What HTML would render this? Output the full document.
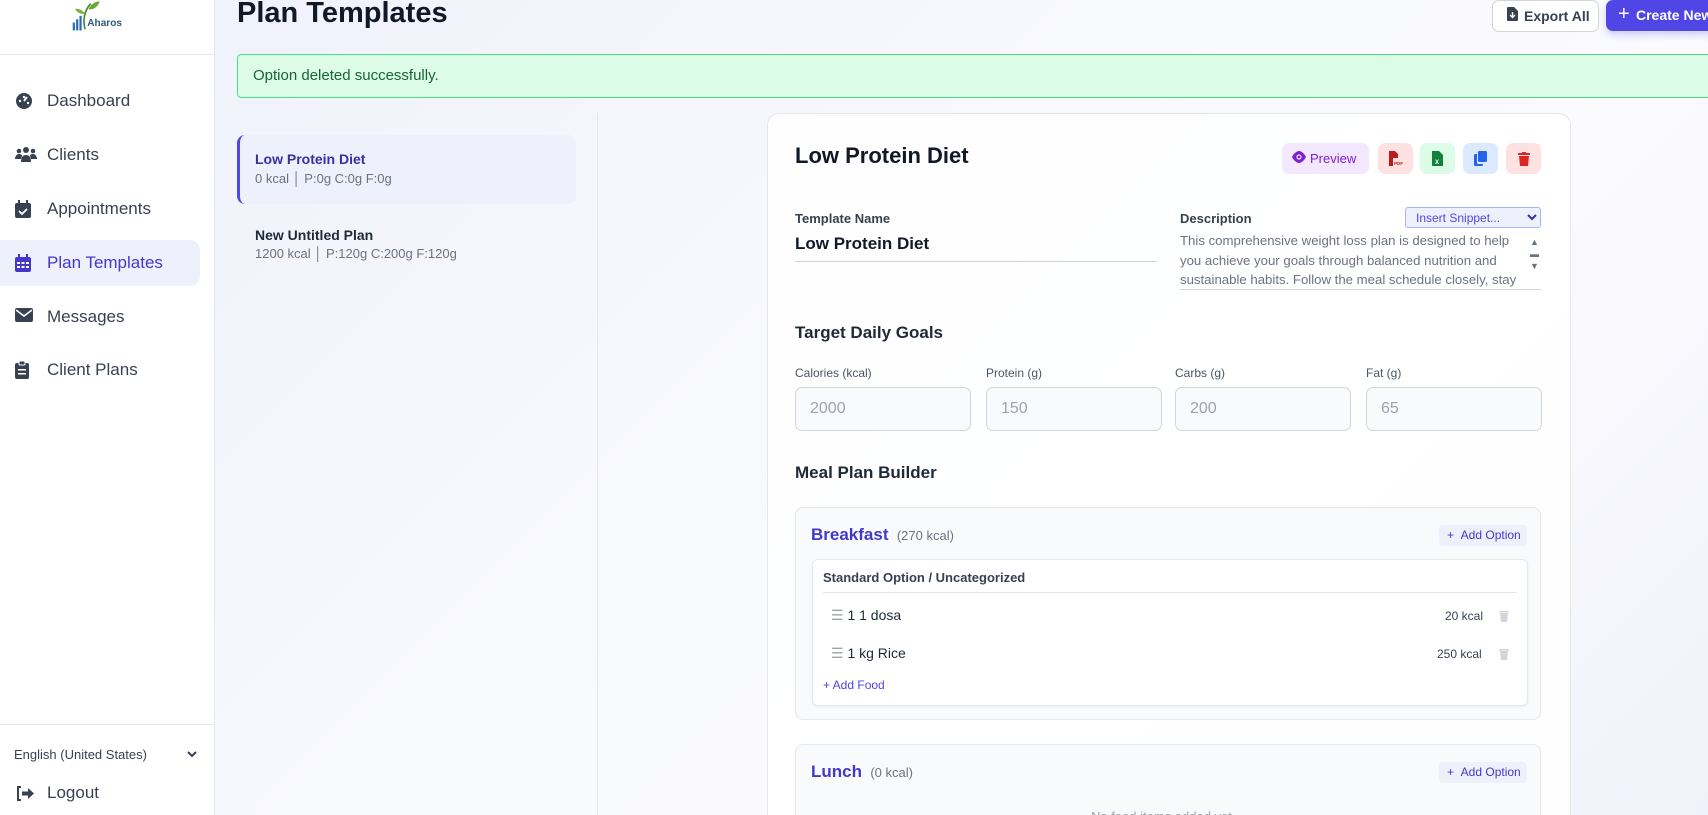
<!DOCTYPE html>
<html><head><meta charset="utf-8"><style>
*{box-sizing:border-box;margin:0;padding:0}
html{width:1708px;height:815px;overflow:hidden}
body{width:1708px;height:815px;overflow:hidden;font-family:"Liberation Sans",sans-serif;background:linear-gradient(135deg,#eef0fb 0%,#f8f9fd 45%,#fbfbfe 70%,#f1f1fb 100%);position:relative;color:#1f2937}
.a{position:absolute;white-space:nowrap}
.sb{position:absolute;left:0;top:0;width:215px;height:815px;background:#fff;border-right:1px solid #e5e7eb}
.nav{position:absolute;left:0;width:200px;height:46px;font-size:17px;color:#374151;display:flex;align-items:center;padding-left:47px}
.nav svg{position:absolute;left:15px;top:14px}
.nav.on{background:#eef0fc;color:#4338ca;border-radius:0 10px 10px 0}
.card{position:absolute;left:767px;top:113px;width:804px;height:702px;background:rgba(255,255,255,.85);border:1px solid #e5e7eb;border-bottom:none;border-radius:12px 12px 0 0}
.ib{position:absolute;top:143px;width:35px;height:31px;border-radius:7px}
.lbl{font-size:12px;color:#4b5563}
.inp{position:absolute;top:387px;width:176px;height:44px;border:1px solid #d1d5db;border-radius:7px;background:#f9fafb;font-size:16px;color:#9ca3af;padding:12px 0 0 14px}
.panel{position:absolute;left:795px;width:746px;background:#f9fafb;border:1px solid #e5e7eb;border-radius:8px}
.addopt{position:absolute;left:643px;width:88px;height:21px;background:#eef0fc;border-radius:4px;color:#4338ca;font-size:12px;padding:3px 0 0 8px}
</style></head><body>
<div class="sb">
  <div class="a" style="left:66px;top:0;width:56px;height:34px">
    <svg width="56" height="34" viewBox="0 0 50 30"><path d="M17 26 C15 18 16 10 22 3" stroke="#4a8a2a" stroke-width="1.5" fill="none"/><path d="M20 8c3-6 8-7 10-7-1 4-5 8-10 7z" fill="#65a832"/><path d="M17 12c-3-4-7-5-9-4 2 3 5 5 9 4z" fill="#7cb342"/><rect x="6" y="20" width="2" height="7" fill="#2a6fb0"/><rect x="9" y="17" width="2" height="10" fill="#2a6fb0"/><rect x="12" y="14" width="2" height="13" fill="#2a6fb0"/><text x="19" y="23" font-size="9" font-family="Liberation Sans" font-weight="bold" fill="#2c5a7a">Aharos</text></svg>
  </div>
  <div class="a" style="left:0;top:54px;width:215px;border-top:1px solid #e5e7eb"></div>
  <div class="nav" style="top:78px"><svg width="18" height="18" viewBox="0 0 18 18"><circle cx="9" cy="9" r="8" fill="#374151"/><path d="M9 9l3-4" stroke="#fff" stroke-width="2"/><circle cx="5" cy="9" r="1.2" fill="#fff"/><circle cx="9" cy="5" r="1.2" fill="#fff"/><circle cx="13" cy="11" r="1.2" fill="#fff"/></svg>Dashboard</div>
  <div class="nav" style="top:132px"><svg width="22" height="16" viewBox="0 0 22 16"><circle cx="11" cy="4" r="3" fill="#374151"/><circle cx="4" cy="5" r="2.3" fill="#374151"/><circle cx="18" cy="5" r="2.3" fill="#374151"/><path d="M6 16c0-5 2-7 5-7s5 2 5 7z M0 13c0-3 2-5 4-5s3 1 3 2l-1 3z M22 13c0-3-2-5-4-5s-3 1-3 2l1 3z" fill="#374151"/></svg>Clients</div>
  <div class="nav" style="top:186px"><svg width="16" height="18" viewBox="0 0 16 18"><rect x="0" y="3" width="16" height="15" rx="2" fill="#374151"/><rect x="3" y="0" width="2" height="4" fill="#374151"/><rect x="11" y="0" width="2" height="4" fill="#374151"/><path d="M4 11l3 3 5-5" stroke="#fff" stroke-width="1.8" fill="none"/></svg>Appointments</div>
  <div class="nav on" style="top:240px"><svg width="16" height="18" viewBox="0 0 16 18"><rect x="0" y="3" width="16" height="15" rx="2" fill="#4338ca"/><rect x="3" y="0" width="2" height="4" fill="#4338ca"/><rect x="11" y="0" width="2" height="4" fill="#4338ca"/><g fill="#fff"><rect x="2" y="8" width="3" height="2"/><rect x="6.5" y="8" width="3" height="2"/><rect x="11" y="8" width="3" height="2"/><rect x="2" y="12" width="3" height="2"/><rect x="6.5" y="12" width="3" height="2"/><rect x="11" y="12" width="3" height="2"/></g></svg>Plan Templates</div>
  <div class="nav" style="top:294px"><svg width="18" height="14" viewBox="0 0 18 14"><rect x="0" y="0" width="18" height="14" rx="2" fill="#374151"/><path d="M1 2l8 6 8-6" stroke="#fff" stroke-width="1.5" fill="none"/></svg>Messages</div>
  <div class="nav" style="top:347px"><svg width="14" height="18" viewBox="0 0 14 18"><rect x="0" y="2" width="14" height="16" rx="2" fill="#374151"/><rect x="4" y="0" width="6" height="4" rx="1" fill="#374151" stroke="#fff"/><rect x="3" y="8" width="8" height="1.5" fill="#fff"/><rect x="3" y="12" width="8" height="1.5" fill="#fff"/></svg>Client Plans</div>
  <div class="a" style="left:0;top:724px;width:215px;border-top:1px solid #e5e7eb"></div>
  <div class="a" style="left:14px;top:747px;font-size:13px;color:#374151">English (United States)</div>
  <svg class="a" style="left:187px;top:750px" width="10" height="8" viewBox="0 0 10 8"><path d="M1 2l4 4 4-4" stroke="#374151" stroke-width="2" fill="none"/></svg>
  <svg class="a" style="left:16px;top:786px" width="18" height="15" viewBox="0 0 18 15"><path d="M5 1H2v13h3" stroke="#374151" stroke-width="2" fill="none"/><path d="M6 5.5h6V2l6 5.5-6 5.5V9.5H6z" fill="#374151"/></svg>
  <div class="a" style="left:47px;top:783px;font-size:17px;color:#374151">Logout</div>
</div>

<div class="a" style="left:237px;top:-3px;font-size:29px;font-weight:bold;color:#111827">Plan Templates</div>
<div class="a" style="left:1492px;top:0;width:107px;height:32px;background:#fff;border:1px solid #d1d5db;border-radius:7px;font-size:14px;font-weight:bold;color:#374151;padding:7px 0 0 31px">Export All</div>
<svg class="a" style="left:1507px;top:7px" width="11" height="14" viewBox="0 0 11 14"><path d="M0 1a1 1 0 011-1h6l4 4v9a1 1 0 01-1 1H1a1 1 0 01-1-1z" fill="#374151"/><path d="M5.5 5v5M3 8l2.5 2.5L8 8" stroke="#fff" stroke-width="1.4" fill="none"/></svg>
<div class="a" style="left:1606px;top:0;width:110px;height:31px;background:#4f46e5;border-radius:7px;font-size:14px;font-weight:bold;color:#fff;padding:7px 0 0 30px;box-shadow:0 4px 8px rgba(79,70,229,.25)">Create New</div>
<div class="a" style="left:1618px;top:3px;color:#fff;font-size:20px">+</div>

<div class="a" style="left:237px;top:54px;width:1480px;height:44px;background:#dcfce7;border:1px solid #4ade80;border-radius:4px;font-size:15px;color:#166534;padding:12px 0 0 15px">Option deleted successfully.</div>

<div class="a" style="left:597px;top:113px;height:702px;border-left:1px solid #e5e7eb"></div>
<div class="a" style="left:237px;top:135px;width:339px;height:69px;background:#eef0fb;border-left:3px solid #4f46e5;border-radius:8px"></div>
<div class="a" style="left:255px;top:151px;font-size:14px;font-weight:bold;color:#3730a3">Low Protein Diet</div>
<div class="a" style="left:255px;top:171px;font-size:13px;color:#6b7280">0 kcal │ P:0g C:0g F:0g</div>
<div class="a" style="left:255px;top:227px;font-size:14px;font-weight:bold;color:#1f2937">New Untitled Plan</div>
<div class="a" style="left:255px;top:246px;font-size:13px;color:#6b7280">1200 kcal │ P:120g C:200g F:120g</div>

<div class="card"></div>
<div class="a" style="left:795px;top:143px;font-size:22px;font-weight:bold;color:#111827">Low Protein Diet</div>
<div class="a" style="left:1282px;top:143px;width:87px;height:31px;background:#f3e8ff;border-radius:7px;color:#7e22ce;font-size:13px;padding:8px 0 0 28px">Preview</div>
<svg class="a" style="left:1292px;top:151px" width="14" height="12" viewBox="0 0 14 12"><path d="M0 6C2 2 5 0 7 0s5 2 7 6c-2 4-5 6-7 6S2 10 0 6z" fill="#7e22ce"/><circle cx="7" cy="6" r="2.6" fill="#f3e8ff"/><circle cx="7" cy="6" r="1.4" fill="#7e22ce"/></svg>
<div class="ib" style="left:1378px;background:#fee2e2"></div>
<svg class="a" style="left:1389px;top:151px" width="14" height="15" viewBox="0 0 14 15"><path d="M0 0h6l3 3v4H4v8H0z" fill="#b91c1c"/><text x="5" y="14" font-size="4.5" font-family="Liberation Sans" font-weight="bold" fill="#b91c1c">PDF</text></svg>
<div class="ib" style="left:1420px;background:#dcfce7"></div>
<svg class="a" style="left:1432px;top:151px" width="11" height="15" viewBox="0 0 11 15"><path d="M0 0h7l4 4v11H0z" fill="#15803d"/><text x="3" y="13" font-size="6" font-family="Liberation Sans" font-weight="bold" fill="#fff">X</text></svg>
<div class="ib" style="left:1463px;background:#dbeafe"></div>
<svg class="a" style="left:1474px;top:151px" width="13" height="15" viewBox="0 0 13 15"><rect x="4" y="0" width="9" height="11" rx="1.5" fill="#2563eb"/><path d="M3 3H1.5A1.5 1.5 0 000 4.5v9A1.5 1.5 0 001.5 15h6A1.5 1.5 0 009 13.5V13H4a1 1 0 01-1-1z" fill="#2563eb"/></svg>
<div class="ib" style="left:1506px;background:#fee2e2"></div>
<svg class="a" style="left:1518px;top:152px" width="12" height="14" viewBox="0 0 12 14"><rect x="0" y="1" width="12" height="2" fill="#dc2626"/><rect x="4" y="0" width="4" height="2" fill="#dc2626"/><path d="M1 4h10l-1 10H2z" fill="#dc2626"/></svg>

<div class="a lbl" style="left:795px;top:211px;font-size:13px;font-weight:bold;color:#374151">Template Name</div>
<div class="a" style="left:795px;top:234px;font-size:17px;font-weight:bold;color:#111827">Low Protein Diet</div>
<div class="a" style="left:795px;top:261px;width:362px;border-top:1px solid #d1d5db"></div>
<div class="a" style="left:1180px;top:211px;font-size:13px;font-weight:bold;color:#374151">Description</div>
<div class="a" style="left:1405px;top:207px;width:136px;height:21px;background:#eef0fc;border:1px solid #a5b4fc;border-radius:3px;font-size:12px;color:#4f46e5;padding:3px 0 0 10px">Insert Snippet...</div>
<svg class="a" style="left:1527px;top:214px" width="10" height="7" viewBox="0 0 10 7"><path d="M1 1l4 4 4-4" stroke="#3730a3" stroke-width="2" fill="none"/></svg>
<div class="a" style="left:1180px;top:231px;width:350px;height:58px;overflow:hidden;font-size:13.2px;line-height:19.6px;color:#6b7280;white-space:normal">This comprehensive weight loss plan is designed to help you achieve your goals through balanced nutrition and sustainable habits. Follow the meal schedule closely, stay</div>
<div class="a" style="left:1530px;top:236px;color:#6b7280;font-size:9px;line-height:12px">▲<br>▬<br>▼</div>
<div class="a" style="left:1180px;top:289px;width:361px;border-top:1px solid #d1d5db"></div>

<div class="a" style="left:795px;top:323px;font-size:17px;font-weight:bold;color:#1f2937">Target Daily Goals</div>
<div class="a lbl" style="left:795px;top:366px">Calories (kcal)</div>
<div class="a lbl" style="left:986px;top:366px">Protein (g)</div>
<div class="a lbl" style="left:1175px;top:366px">Carbs (g)</div>
<div class="a lbl" style="left:1366px;top:366px">Fat (g)</div>
<div class="inp" style="left:795px">2000</div>
<div class="inp" style="left:986px">150</div>
<div class="inp" style="left:1175px">200</div>
<div class="inp" style="left:1366px">65</div>

<div class="a" style="left:795px;top:463px;font-size:17px;font-weight:bold;color:#1f2937">Meal Plan Builder</div>

<div class="panel" style="top:507px;height:213px">
  <div class="a" style="left:15px;top:17px;font-size:17px;font-weight:bold;color:#4338ca">Breakfast <span style="font-size:13px;font-weight:normal;color:#6b7280">&nbsp;(270 kcal)</span></div>
  <div class="addopt" style="top:17px">+ &nbsp;Add Option</div>
  <div class="a" style="left:16px;top:51px;width:716px;height:147px;background:#fff;border:1px solid #e5e7eb;border-radius:6px;box-shadow:0 1px 2px rgba(0,0,0,.05)">
    <div class="a" style="left:10px;top:10px;font-size:13px;font-weight:bold;color:#374151">Standard Option / Uncategorized</div>
    <div class="a" style="left:10px;top:32px;width:694px;border-top:1px solid #e5e7eb"></div>
    <div class="a" style="left:18px;top:47px;font-size:14px;color:#1f2937"><span style="color:#9ca3af">☰</span> 1 1 dosa</div>
    <div class="a" style="left:632px;top:49px;font-size:12px;color:#374151">20 kcal</div>
    <div class="a" style="left:18px;top:85px;font-size:14px;color:#1f2937"><span style="color:#9ca3af">☰</span> 1 kg Rice</div>
    <div class="a" style="left:624px;top:87px;font-size:12px;color:#374151">250 kcal</div>
    <svg class="a" style="left:686px;top:50px" width="10" height="12" viewBox="0 0 10 12"><rect x="0" y="1" width="10" height="1.5" fill="#d1d5db"/><path d="M1 3h8l-1 9H2z" fill="#d1d5db"/></svg>
    <svg class="a" style="left:686px;top:88px" width="10" height="12" viewBox="0 0 10 12"><rect x="0" y="1" width="10" height="1.5" fill="#d1d5db"/><path d="M1 3h8l-1 9H2z" fill="#d1d5db"/></svg>
    <div class="a" style="left:10px;top:118px;font-size:12px;color:#4f46e5">+ Add Food</div>
  </div>
</div>
<div class="panel" style="top:744px;height:71px;border-bottom:none;border-radius:8px 8px 0 0">
  <div class="a" style="left:15px;top:17px;font-size:17px;font-weight:bold;color:#4338ca">Lunch <span style="font-size:13px;font-weight:normal;color:#6b7280">&nbsp;(0 kcal)</span></div>
  <div class="addopt" style="top:17px">+ &nbsp;Add Option</div>
  <div class="a" style="left:295px;top:64px;font-size:13px;color:#9ca3af">No food items added yet</div>
</div>
</body></html>
